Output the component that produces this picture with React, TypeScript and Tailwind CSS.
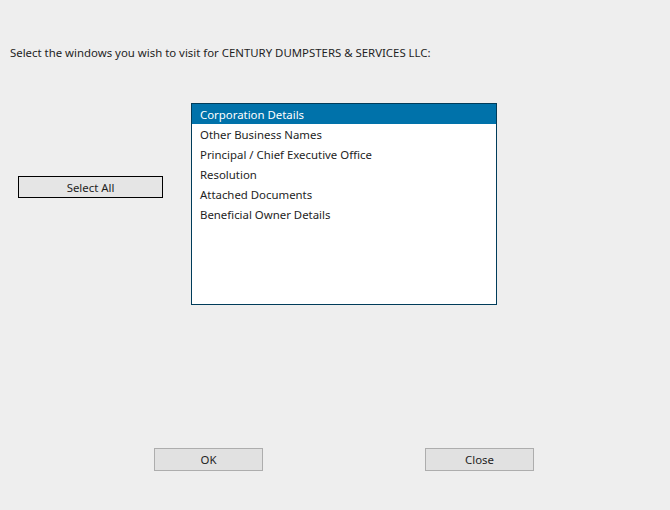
const items = [
  'Corporation Details',
  'Other Business Names',
  'Principal / Chief Executive Office',
  'Resolution',
  'Attached Documents',
  'Beneficial Owner Details',
];

export default function App() {
  return (
    <div
      className="w-[670px] h-[510px] bg-[#eeeeee] text-[#1e1e1e] text-[11.4px] leading-[16px] overflow-hidden"
      style={{ fontFamily: '"Noto Sans", "Open Sans", sans-serif' }}
    >
      <div className="pt-[45px] pl-[10px] h-[59px]">
        Select the windows you wish to visit for CENTURY DUMPSTERS &amp; SERVICES LLC:
      </div>

      <div className="flex mt-[44px]">
        <div className="w-[191px] pl-[18px] pt-[73px]">
          <button className="w-[145px] h-[22px] border border-black bg-[#e5e5e5] pt-px leading-[19px] text-[#1e1e1e]">
            Select All
          </button>
        </div>
        <div className="w-[306px] h-[202px] border border-[#003c5a] bg-white">
          {items.map((item, i) => (
            <div
              key={item}
              className={
                i === 0
                  ? 'h-[20px] pt-px leading-[19px] pl-[8px] bg-[#0072aa] text-white'
                  : 'h-[20px] pt-px leading-[19px] pl-[8px]'
              }
            >
              {item}
            </div>
          ))}
        </div>
      </div>

      <div className="flex mt-[143px]">
        <div className="pl-[154px]">
          <button className="w-[109px] h-[23px] border border-[#adadad] bg-[#e1e1e1] pt-px leading-[20px] text-[#1e1e1e]">
            OK
          </button>
        </div>
        <div className="pl-[162px]">
          <button className="w-[109px] h-[23px] border border-[#adadad] bg-[#e1e1e1] pt-px leading-[20px] text-[#1e1e1e]">
            Close
          </button>
        </div>
      </div>
    </div>
  );
}
